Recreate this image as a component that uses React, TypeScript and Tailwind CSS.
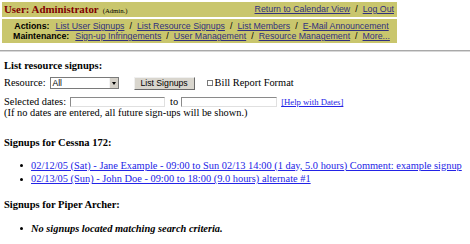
import React from "react";

const serif = { fontFamily: '"Liberation Serif", "Times New Roman", serif' };
const sans = { fontFamily: '"Liberation Sans", Arial, sans-serif' };

function NavLinks({ items }: { items: string[] }) {
  return (
    <>
      {items.map((t, i) => (
        <React.Fragment key={t}>
          {i > 0 && <span className="text-black mx-[5px]">/</span>}
          <a href="#" className="text-[#30307e] underline">
            {t}
          </a>
        </React.Fragment>
      ))}
    </>
  );
}

export default function App() {
  return (
    <div className="w-[470px] h-[244px] bg-white text-black overflow-hidden" style={serif}>
      {/* Header */}
      <div className="ml-[2px] mt-[2px] w-[395px] flex flex-col gap-[2px]">
        <div className="h-[15px] bg-[#c9c66d] flex items-center justify-between pl-[2px] pr-[3px]">
          <div className="flex items-baseline">
            <span className="text-[10.9px] font-bold text-[#800000]">User: Administrator</span>
            <span className="text-[6.7px] ml-[4px]">(Admin.)</span>
          </div>
          <div className="text-[8.8px]" style={sans}>
            <NavLinks items={["Return to Calendar View", "Log Out"]} />
          </div>
        </div>
        <div
          className="h-[24px] bg-[#c9c66d] flex flex-col justify-center items-center text-[8.8px] leading-[10px] pl-[4px]"
          style={sans}
        >
          <div className="whitespace-nowrap">
            <span className="font-bold">Actions:</span>
            <span className="ml-[6px]" />
            <NavLinks items={["List User Signups", "List Resource Signups", "List Members", "E-Mail Announcement"]} />
          </div>
          <div className="whitespace-nowrap">
            <span className="font-bold">Maintenance:</span>
            <span className="ml-[6px]" />
            <NavLinks items={["Sign-up Infringements", "User Management", "Resource Management", "More..."]} />
          </div>
        </div>
      </div>

      <div className="mt-[7px] h-[2px] bg-[#a9a9a9] border-b border-[#d8d8d8]" />

      <div className="pl-[4px] text-[10.4px] leading-[12px]">
        <div className="mt-[8px] font-bold text-[10.5px]">List resource signups:</div>

        {/* Resource row */}
        <div className="mt-[4px] h-[14px] flex items-center">
          <span>Resource:</span>
          <div className="ml-[4px] w-[69px] h-[12px] border border-[#7a7a7a] flex items-stretch bg-white">
            <span className="flex-1 pl-[2px] text-[8.5px] leading-[10px]" style={sans}>All</span>
            <span className="w-[9px] bg-[#d4d0c8] border-l border-[#f4f4f4] flex items-center justify-center">
              <span className="w-0 h-0 border-l-[2.5px] border-r-[2.5px] border-t-[3px] border-l-transparent border-r-transparent border-t-black" />
            </span>
          </div>
          <button
            className="ml-[15px] w-[61px] h-[13px] bg-[#d9d6ce] border border-[#f0f0f0] border-r-[#6a6a6a] border-b-[#6a6a6a] text-[8.7px] leading-[11px] text-black"
            style={sans}
          >
            List Signups
          </button>
          <span className="ml-[12px] w-[6px] h-[6px] border border-[#7a7a7a] bg-white" />
          <span className="ml-[2px]">Bill Report Format</span>
        </div>

        {/* Dates row */}
        <div className="mt-[6px] h-[12px] flex items-center">
          <span>Selected dates:</span>
          <span className="ml-[4px] w-[95px] h-[10px] border border-[#8a8a8a] border-r-[#e0e0e0] border-b-[#e0e0e0] bg-white" />
          <span className="ml-[5px]">to</span>
          <span className="ml-[3px] w-[96px] h-[10px] border border-[#8a8a8a] border-r-[#e0e0e0] border-b-[#e0e0e0] bg-white" />
          <a href="#" className="ml-[4px] text-[8.7px] text-[#2323e6] underline">
            [Help with Dates]
          </a>
        </div>

        <div className="-mt-[1px]">(If no dates are entered, all future sign-ups will be shown.)</div>

        <div className="mt-[18px] font-bold text-[10.5px]">Signups for Cessna 172:</div>
        <ul className="mt-[10px]">
          {[
            "02/12/05 (Sat) - Jane Example - 09:00 to Sun 02/13 14:00 (1 day, 5.0 hours) Comment: example signup",
            "02/13/05 (Sun) - John Doe - 09:00 to 18:00 (9.0 hours) alternate #1",
          ].map((t) => (
            <li key={t} className="flex items-center h-[13.5px] whitespace-nowrap">
              <span className="ml-[16px] w-[3px] h-[3px] rounded-full bg-black" />
              <a href="#" className="ml-[8px] text-[#2323e6] underline">
                {t}
              </a>
            </li>
          ))}
        </ul>

        <div className="mt-[13px] font-bold text-[10.5px]">Signups for Piper Archer:</div>
        <ul className="mt-[11px]">
          <li className="flex items-center h-[13px]">
            <span className="ml-[16px] w-[3px] h-[3px] rounded-full bg-black" />
            <span className="ml-[8px] font-bold italic">No signups located matching search criteria.</span>
          </li>
        </ul>
      </div>
    </div>
  );
}
